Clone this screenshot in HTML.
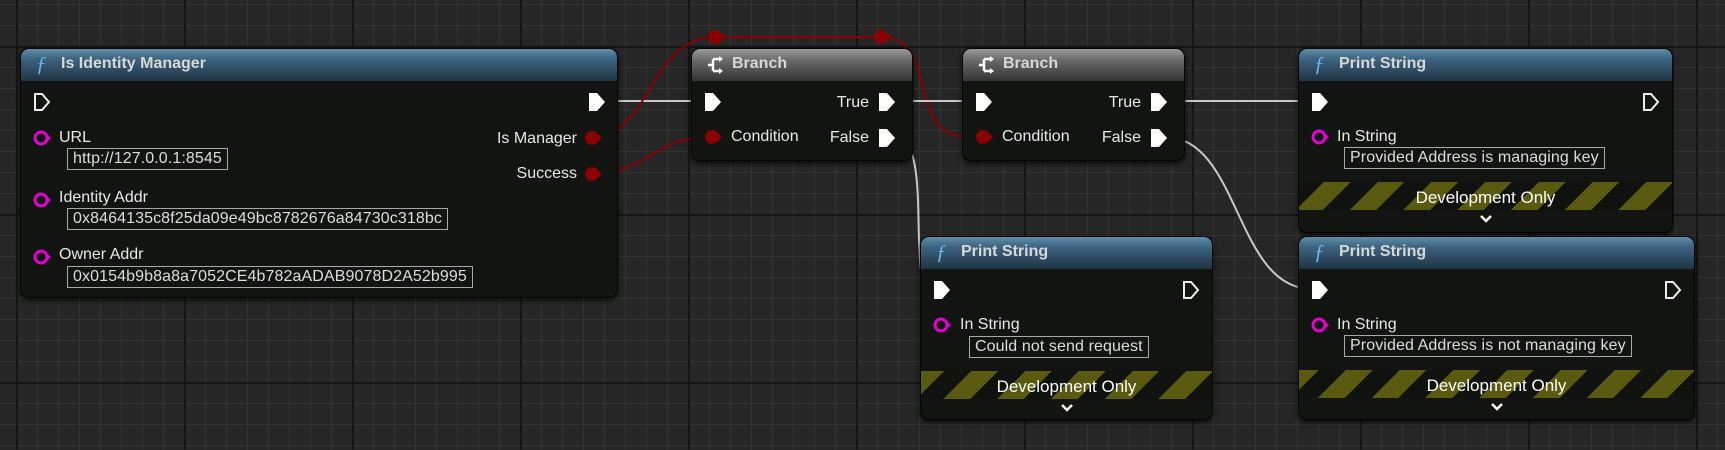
<!DOCTYPE html>
<html><head><meta charset="utf-8"><style>
*{margin:0;padding:0;box-sizing:border-box}
body{width:1725px;height:450px;overflow:hidden;position:relative;font-family:"Liberation Sans",sans-serif;color:#e8e8e8;
background-color:#262626;
background-image:
linear-gradient(to right,#151515 0 2px,transparent 2px),
linear-gradient(to bottom,#151515 0 2px,transparent 2px),
linear-gradient(to right,#343434 0 1px,transparent 1px),
linear-gradient(to bottom,#343434 0 1px,transparent 1px);
background-size:168px 168px,168px 168px,21px 21px,21px 21px;
background-position:16px 0,0 46px,16px 0,0 4px;}
.node{position:absolute;background:#121412;border-radius:9px;box-shadow:0 2px 6px rgba(0,0,0,.8);border:1px solid #050505}
.hdr{position:absolute;left:0;top:0;right:0;height:32px;border-radius:8px 8px 0 0;font-weight:bold;font-size:16px;color:#d8d8d8;line-height:30px;padding-left:40px}
.blue{background:linear-gradient(to bottom,#5f8eab 0%,#3d6580 30%,#1f3442 100%)}
.grey{background:linear-gradient(to bottom,#9a9a9a 0%,#6a6a6a 35%,#333 100%)}
.f{position:absolute;left:15px;top:0;font-family:"Liberation Serif",serif;font-style:italic;color:#6ab6ee;font-weight:normal;font-size:21px}
.t{position:absolute;font-size:16px;white-space:nowrap;line-height:18px}
.box{position:absolute;border:1px solid #a8a8a8;font-size:16px;color:#ddd;line-height:20px;padding:0 5px;white-space:nowrap;letter-spacing:0.1px}
svg.p{position:absolute;overflow:visible}
.stripes{position:absolute;left:0;right:0;height:28px;background:repeating-linear-gradient(-45deg,#101210 0 19px,#59590f 19px 38px)}
.dev{position:absolute;left:0;right:0;text-align:center;font-size:17px;color:#fff;line-height:20px}
.chev{position:absolute;left:50%;margin-left:-6px}
</style></head><body>
<svg style="position:absolute;left:0;top:0" width="1725" height="450">
<g fill="none" stroke-width="2">
<path d="M605 101 L712 101" stroke="#c8c8c8"/>
<path d="M593 137 C650 137 650 37 715 37 L881 37 C940 37 905 137 968 137" stroke="#8a0000"/>
<path d="M593 173 C650 173 650 137 712 137" stroke="#8a0000"/>
<path d="M888 101 L980 101" stroke="#c8c8c8"/>
<path d="M895 137 C935 137 905 289 932 289" stroke="#c8c8c8"/>
<path d="M1160 101 L1312 101" stroke="#c8c8c8"/>
<path d="M1165 137 C1240 137 1235 289 1312 289" stroke="#c8c8c8"/>
</g>
<circle cx="715" cy="37" r="7" fill="#8a0000"/><path d="M721 33 L726 37 L721 41Z" fill="#8a0000"/>
<circle cx="881" cy="37" r="7" fill="#8a0000"/><path d="M887 33 L892 37 L887 41Z" fill="#8a0000"/>
</svg>

<div class="node" style="left:20px;top:48px;width:598px;height:250px">
<div class="hdr blue">Is Identity Manager<span class="f">ƒ</span></div>
<svg class="p" style="left:12px;top:43px" width="18" height="20"><path d="M2 2 H9 L16 10 L9 18 H2Z" fill="none" stroke="#eee" stroke-width="2"/></svg>
<svg class="p" style="left:567px;top:43px" width="18" height="20"><path d="M1 1 H9 L17 10 L9 19 H1Z" fill="#fff"/></svg>
<svg class="p" style="left:12px;top:81px" width="20" height="16"><circle cx="8" cy="8" r="6" fill="none" stroke="#e000d0" stroke-width="3"/><path d="M14 4.5 L18 8 L14 11.5Z" fill="#e000d0"/></svg>
<div class="t" style="left:38px;top:80px">URL</div>
<div class="box" style="left:46px;top:99px">http://127.0.0.1:8545</div>
<svg class="p" style="left:12px;top:143px" width="20" height="16"><circle cx="8" cy="8" r="6" fill="none" stroke="#e000d0" stroke-width="3"/><path d="M14 4.5 L18 8 L14 11.5Z" fill="#e000d0"/></svg>
<div class="t" style="left:38px;top:140px">Identity Addr</div>
<div class="box" style="left:46px;top:159px">0x8464135c8f25da09e49bc8782676a84730c318bc</div>
<svg class="p" style="left:12px;top:200px" width="20" height="16"><circle cx="8" cy="8" r="6" fill="none" stroke="#e000d0" stroke-width="3"/><path d="M14 4.5 L18 8 L14 11.5Z" fill="#e000d0"/></svg>
<div class="t" style="left:38px;top:197px">Owner Addr</div>
<div class="box" style="left:46px;top:217px">0x0154b9b8a8a7052CE4b782aADAB9078D2A52b995</div>
<div class="t" style="right:40px;top:81px">Is Manager</div>
<svg class="p" style="left:563px;top:81px" width="20" height="16"><circle cx="8" cy="8" r="7" fill="#8a0000"/><path d="M14 4.5 L18 8 L14 11.5Z" fill="#8a0000"/></svg>
<div class="t" style="right:40px;top:116px">Success</div>
<svg class="p" style="left:563px;top:117px" width="20" height="16"><circle cx="8" cy="8" r="7" fill="#8a0000"/><path d="M14 4.5 L18 8 L14 11.5Z" fill="#8a0000"/></svg>
</div>

<div class="node" style="left:691px;top:48px;width:222px;height:113px">
<div class="hdr grey">Branch<svg style="position:absolute;left:14px;top:7px" width="20" height="18"><path d="M2 9 H7 M7 3 V15 M7 3 H15 M7 15 H15" stroke="#fff" stroke-width="2.5" fill="none"/><path d="M13 0 L17 3 L13 6Z M13 12 L17 15 L13 18Z" fill="#fff"/></svg></div>
<svg class="p" style="left:12px;top:43px" width="18" height="20"><path d="M1 1 H9 L17 10 L9 19 H1Z" fill="#fff"/></svg>
<svg class="p" style="left:12px;top:80px" width="20" height="16"><circle cx="8" cy="8" r="7" fill="#8a0000"/><path d="M14 4.5 L18 8 L14 11.5Z" fill="#8a0000"/></svg>
<div class="t" style="left:39px;top:79px">Condition</div>
<div class="t" style="right:43px;top:45px">True</div>
<svg class="p" style="left:186px;top:43px" width="18" height="20"><path d="M1 1 H9 L17 10 L9 19 H1Z" fill="#fff"/></svg>
<div class="t" style="right:43px;top:80px">False</div>
<svg class="p" style="left:186px;top:79px" width="18" height="20"><path d="M1 1 H9 L17 10 L9 19 H1Z" fill="#fff"/></svg>
</div>
<div class="node" style="left:962px;top:48px;width:223px;height:113px">
<div class="hdr grey">Branch<svg style="position:absolute;left:14px;top:7px" width="20" height="18"><path d="M2 9 H7 M7 3 V15 M7 3 H15 M7 15 H15" stroke="#fff" stroke-width="2.5" fill="none"/><path d="M13 0 L17 3 L13 6Z M13 12 L17 15 L13 18Z" fill="#fff"/></svg></div>
<svg class="p" style="left:12px;top:43px" width="18" height="20"><path d="M1 1 H9 L17 10 L9 19 H1Z" fill="#fff"/></svg>
<svg class="p" style="left:12px;top:80px" width="20" height="16"><circle cx="8" cy="8" r="7" fill="#8a0000"/><path d="M14 4.5 L18 8 L14 11.5Z" fill="#8a0000"/></svg>
<div class="t" style="left:39px;top:79px">Condition</div>
<div class="t" style="right:43px;top:45px">True</div>
<svg class="p" style="left:187px;top:43px" width="18" height="20"><path d="M1 1 H9 L17 10 L9 19 H1Z" fill="#fff"/></svg>
<div class="t" style="right:43px;top:80px">False</div>
<svg class="p" style="left:187px;top:79px" width="18" height="20"><path d="M1 1 H9 L17 10 L9 19 H1Z" fill="#fff"/></svg>
</div>

<div class="node" style="left:1298px;top:48px;width:375px;height:185px">
<div class="hdr blue">Print String<span class="f">ƒ</span></div>
<svg class="p" style="left:12px;top:43px" width="18" height="20"><path d="M1 1 H9 L17 10 L9 19 H1Z" fill="#fff"/></svg>
<svg class="p" style="left:343px;top:43px" width="18" height="20"><path d="M2 2 H9 L16 10 L9 18 H2Z" fill="none" stroke="#eee" stroke-width="2"/></svg>
<svg class="p" style="left:12px;top:80px" width="20" height="16"><circle cx="8" cy="8" r="6" fill="none" stroke="#e000d0" stroke-width="3"/><path d="M14 4.5 L18 8 L14 11.5Z" fill="#e000d0"/></svg>
<div class="t" style="left:38px;top:79px">In String</div>
<div class="box" style="left:45px;top:98px">Provided Address is managing key</div>
<div class="stripes" style="top:133px"></div>
<div class="dev" style="top:139px">Development Only</div>
<svg class="chev" style="top:166px" width="12" height="8"><path d="M1 1 L6 6 L11 1" stroke="#fff" stroke-width="2.5" fill="none"/></svg>
</div>
<div class="node" style="left:920px;top:236px;width:293px;height:184px">
<div class="hdr blue">Print String<span class="f">ƒ</span></div>
<svg class="p" style="left:12px;top:43px" width="18" height="20"><path d="M1 1 H9 L17 10 L9 19 H1Z" fill="#fff"/></svg>
<svg class="p" style="left:261px;top:43px" width="18" height="20"><path d="M2 2 H9 L16 10 L9 18 H2Z" fill="none" stroke="#eee" stroke-width="2"/></svg>
<svg class="p" style="left:12px;top:80px" width="20" height="16"><circle cx="8" cy="8" r="6" fill="none" stroke="#e000d0" stroke-width="3"/><path d="M14 4.5 L18 8 L14 11.5Z" fill="#e000d0"/></svg>
<div class="t" style="left:39px;top:79px">In String</div>
<div class="box" style="left:48px;top:99px">Could not send request</div>
<div class="stripes" style="top:134px"></div>
<div class="dev" style="top:140px">Development Only</div>
<svg class="chev" style="top:167px" width="12" height="8"><path d="M1 1 L6 6 L11 1" stroke="#fff" stroke-width="2.5" fill="none"/></svg>
</div>
<div class="node" style="left:1298px;top:236px;width:397px;height:184px">
<div class="hdr blue">Print String<span class="f">ƒ</span></div>
<svg class="p" style="left:12px;top:43px" width="18" height="20"><path d="M1 1 H9 L17 10 L9 19 H1Z" fill="#fff"/></svg>
<svg class="p" style="left:365px;top:43px" width="18" height="20"><path d="M2 2 H9 L16 10 L9 18 H2Z" fill="none" stroke="#eee" stroke-width="2"/></svg>
<svg class="p" style="left:12px;top:80px" width="20" height="16"><circle cx="8" cy="8" r="6" fill="none" stroke="#e000d0" stroke-width="3"/><path d="M14 4.5 L18 8 L14 11.5Z" fill="#e000d0"/></svg>
<div class="t" style="left:38px;top:79px">In String</div>
<div class="box" style="left:45px;top:98px">Provided Address is not managing key</div>
<div class="stripes" style="top:133px"></div>
<div class="dev" style="top:139px">Development Only</div>
<svg class="chev" style="top:166px" width="12" height="8"><path d="M1 1 L6 6 L11 1" stroke="#fff" stroke-width="2.5" fill="none"/></svg>
</div>
</body></html>
